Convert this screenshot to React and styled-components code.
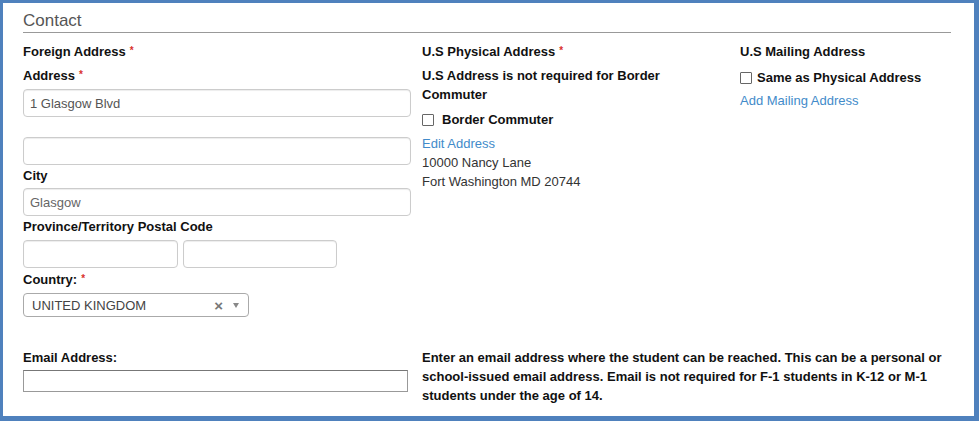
import React from "react";
import styled, { createGlobalStyle } from "styled-components";

const Global = createGlobalStyle`
  html, body { margin: 0; padding: 0; background: #fff; }
  body { font-family: "Liberation Sans", Arial, sans-serif; }
  * { box-sizing: border-box; }
`;

const Frame = styled.div`
  width: 979px;
  height: 421px;
  background: #fff;
  border-style: solid;
  border-color: #4f81bd;
  border-width: 3px 5px 5px 3px;
  padding: 8px 23px 0 20px;
`;

const Title = styled.div`
  font-size: 17px;
  line-height: 20px;
  color: #555;
  padding-bottom: 1px;
  border-bottom: 1px solid #999;
`;

const Grid = styled.div`
  display: grid;
  grid-template-columns: 399px 318px 1fr;
  margin-top: ${(p) => p.$mt}px;
`;

const Col = styled.div`
  display: flex;
  flex-direction: column;
  align-items: flex-start;
`;

const Label = styled.div`
  font-size: 13px;
  line-height: 21px;
  height: 19px;
  font-weight: bold;
  color: #111;
  margin-bottom: ${(p) => p.$mb ?? 0}px;
`;

const Req = styled.span`
  color: #d9312b;
  font-size: 10px;
  line-height: 0;
  margin-left: 4px;
  vertical-align: 2px;
`;

const TextInput = styled.input`
  width: ${(p) => p.$w}px;
  height: 28px;
  border: 1px solid #ccc;
  border-radius: 4px;
  padding: 0 6px;
  font-family: "Liberation Sans", Arial, sans-serif;
  font-size: 13px;
  color: ${(p) => p.$color || "#555"};
  background: #fff;
  box-shadow: inset 0 1px 1px rgba(0, 0, 0, 0.075);
  margin-bottom: ${(p) => p.$mb ?? 0}px;
  outline: none;
`;

const InputRow = styled.div`
  display: flex;
  gap: 5px;
  margin-bottom: 1px;
`;

const Select = styled.div`
  width: 226px;
  height: 24px;
  border: 1px solid #aaa;
  border-radius: 4px;
  display: flex;
  align-items: center;
  padding: 0 9px 0 8px;
  font-size: 13px;
  color: #444;
  background: #fff;
`;

const SelectValue = styled.span`
  flex: 1;
`;

const Clear = styled.span`
  color: #777;
  font-size: 15px;
  font-weight: bold;
  margin-right: 10px;
  line-height: 1;
`;

const Arrow = styled.span`
  width: 0;
  height: 0;
  border-left: 3px solid transparent;
  border-right: 3px solid transparent;
  border-top: 5px solid #888;
`;

const EmailInput = styled.input`
  width: 385px;
  height: 22px;
  border: 1px solid #999;
  border-top-color: #777;
  border-radius: 0;
  padding: 0 4px;
  font-size: 13px;
  background: #fff;
  outline: none;
`;

const BoldText = styled.div`
  font-size: 13px;
  line-height: 19px;
  font-weight: bold;
  color: #111;
  width: ${(p) => (p.$w ? `${p.$w}px` : "auto")};
`;

const CheckRow = styled.label`
  display: flex;
  align-items: center;
  gap: ${(p) => p.$gap}px;
  font-size: 13px;
  line-height: 19px;
  font-weight: bold;
  color: #111;
  margin-top: ${(p) => p.$mt ?? 0}px;
  margin-bottom: ${(p) => p.$mb ?? 0}px;
`;

const Box = styled.span`
  width: 12px;
  height: 12px;
  border: 1px solid #666;
  border-radius: 1px;
  background: #fff;
  flex: none;
`;

const Link = styled.a`
  font-size: 13px;
  line-height: 19px;
  color: #428bca;
  text-decoration: none;
  cursor: pointer;
`;

const Plain = styled.div`
  font-size: 13px;
  line-height: 19px;
  color: #333;
`;

const Help = styled.div`
  grid-column: 2 / span 2;
  padding-top: 1px;
  font-size: 13px;
  line-height: 19px;
  font-weight: bold;
  color: #111;
`;

export default function App() {
  return (
    <>
      <Global />
      <Frame>
        <Title>Contact</Title>
        <Grid $mt={8}>
          <Col>
            <Label $mb={5}>
              Foreign Address<Req>*</Req>
            </Label>
            <Label $mb={5}>
              Address<Req>*</Req>
            </Label>
            <TextInput $w={388} $mb={20} value="1 Glasgow Blvd" readOnly />
            <TextInput $w={388} value="" readOnly />
            <Label $mb={4}>City</Label>
            <TextInput $w={388} $color="#666" value="Glasgow" readOnly />
            <Label $mb={5}>Province/Territory Postal Code</Label>
            <InputRow>
              <TextInput $w={155} value="" readOnly />
              <TextInput $w={154} value="" readOnly />
            </InputRow>
            <Label $mb={5}>
              Country:<Req>*</Req>
            </Label>
            <Select>
              <SelectValue>UNITED KINGDOM</SelectValue>
              <Clear>×</Clear>
              <Arrow />
            </Select>
          </Col>
          <Col>
            <Label $mb={6}>
              U.S Physical Address<Req>*</Req>
            </Label>
            <BoldText $w={260}>U.S Address is not required for Border Commuter</BoldText>
            <CheckRow $gap={8} $mt={6} $mb={5}>
              <Box />
              Border Commuter
            </CheckRow>
            <Link>Edit Address</Link>
            <Plain>10000 Nancy Lane</Plain>
            <Plain>Fort Washington MD 20744</Plain>
          </Col>
          <Col>
            <Label $mb={0}>U.S Mailing Address</Label>
            <CheckRow $gap={5} $mt={8} $mb={4}>
              <Box />
              Same as Physical Address
            </CheckRow>
            <Link>Add Mailing Address</Link>
          </Col>
        </Grid>
        <Grid $mt={30}>
          <Col>
            <Label $mb={4}>Email Address:</Label>
            <EmailInput value="" readOnly />
          </Col>
          <Help>
            Enter an email address where the student can be reached. This can be a personal or
            school-issued email address. Email is not required for F-1 students in K-12 or M-1
            students under the age of 14.
          </Help>
        </Grid>
      </Frame>
    </>
  );
}
